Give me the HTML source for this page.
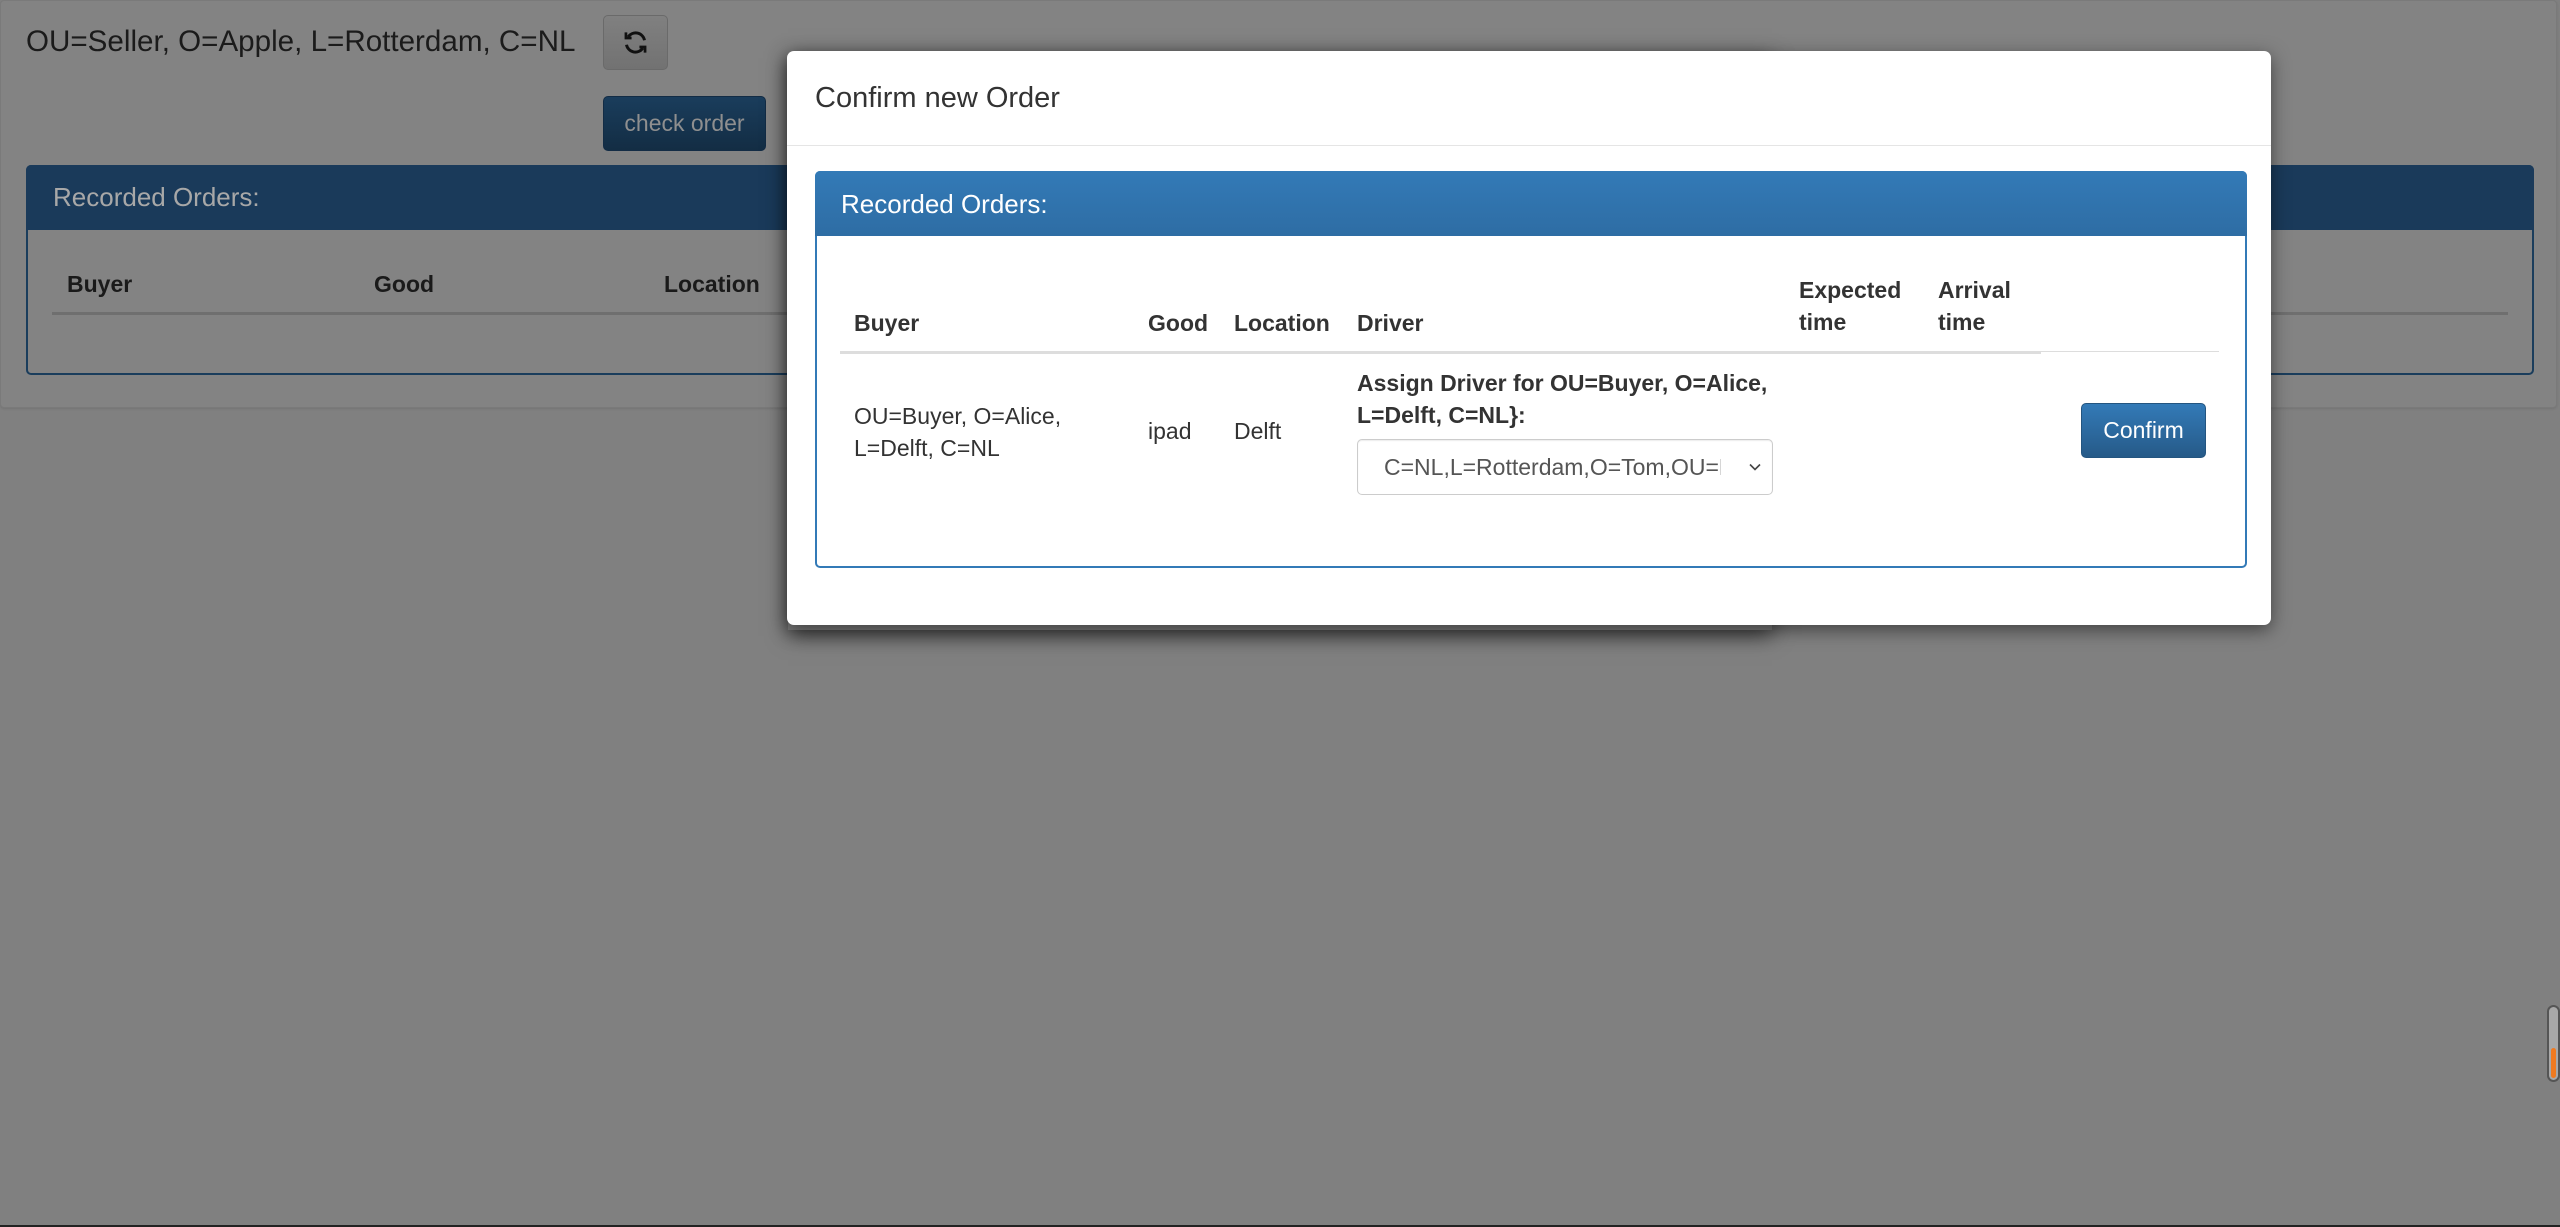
<!DOCTYPE html>
<html><head><meta charset="utf-8"><style>
*{box-sizing:border-box;margin:0;padding:0}
html,body{width:2560px;height:1227px;overflow:hidden;background:#808080;font-family:"Liberation Sans",Arial,sans-serif;color:#333;position:relative}
.a{position:absolute;white-space:nowrap}
.t{font-size:23px;line-height:32px}
.b{font-weight:bold}
</style></head><body>
<!-- background (dimmed) -->
<div class="a" style="left:0;top:0;width:2557px;height:408px;background:#838383;border:1px solid #7a7a7a;border-radius:4px;box-shadow:0 1px 2px rgba(0,0,0,.1)"></div>
<div class="a" style="left:26px;top:24px;font-size:29.6px;line-height:36px;color:#1b1b1b">OU=Seller, O=Apple, L=Rotterdam, C=NL</div>
<div class="a" style="left:603px;top:15px;width:65px;height:55px;border:1px solid #6a6a6a;border-radius:5px;background:linear-gradient(#808080,#727272)"></div>
<svg class="a" style="left:622px;top:29px" width="27" height="27" viewBox="0 0 24 24" fill="none" stroke="#111" stroke-width="2.6"><path d="M20 10a8 8 0 0 0-14.5-3"/><path d="M4 14a8 8 0 0 0 14.5 3"/><path d="M3.5 3v5h5" stroke-width="2.4"/><path d="M20.5 21v-5h-5" stroke-width="2.4"/></svg>
<div class="a t" style="left:603px;top:96px;width:163px;height:55px;border:1px solid #132c45;border-radius:5px;background:linear-gradient(#1a3d5c,#132d44);color:#8f8f8f;text-align:center;line-height:53px">check order</div>
<div class="a" style="left:26px;top:165px;width:2508px;height:210px;border:2px solid #1a3d5c;border-radius:5px"></div>
<div class="a" style="left:26px;top:165px;width:2508px;height:65px;background:#1a3a5a;border-radius:5px 5px 0 0"></div>
<div class="a" style="left:53px;top:181px;font-size:26px;line-height:32px;color:#a8a8a8">Recorded Orders:</div>
<div class="a t b" style="left:67px;top:268px;color:#1a1a1a">Buyer</div>
<div class="a t b" style="left:374px;top:268px;color:#1a1a1a">Good</div>
<div class="a t b" style="left:664px;top:268px;color:#1a1a1a">Location</div>
<div class="a" style="left:52px;top:312px;width:2456px;height:3px;background:#6f6f6f"></div>
<div class="a" style="left:0;top:1225px;width:2560px;height:2px;background:#222"></div>
<!-- scrollbar -->
<div class="a" style="left:2547px;top:1005px;width:13px;height:77px;border:2px solid #555;border-radius:7px;background:#a8a8a8"></div>
<div class="a" style="left:2551px;top:1048px;width:5px;height:30px;background:#f07a20;border-radius:3px"></div>
<!-- shadow of box behind modal -->
<div class="a" style="left:788px;top:52px;width:984px;height:578px;background:#7a7a7a;box-shadow:0 6px 20px rgba(0,0,0,.55)"></div>
<!-- modal -->
<div class="a" style="left:787px;top:51px;width:1484px;height:574px;background:#fff;border-radius:7px;box-shadow:0 5px 18px rgba(0,0,0,.5)"></div>
<div class="a" style="left:815px;top:80px;font-size:29px;line-height:36px;color:#333">Confirm new Order</div>
<div class="a" style="left:787px;top:145px;width:1484px;height:1px;background:#e5e5e5"></div>
<div class="a" style="left:815px;top:171px;width:1432px;height:397px;border:2px solid #337ab7;border-radius:5px"></div>
<div class="a" style="left:815px;top:171px;width:1432px;height:65px;background:linear-gradient(#337ab7,#2e6da4);border-radius:5px 5px 0 0"></div>
<div class="a" style="left:841px;top:188px;font-size:26px;line-height:32px;color:#fff">Recorded Orders:</div>
<div class="a t b" style="left:854px;top:307px">Buyer</div>
<div class="a t b" style="left:1148px;top:307px">Good</div>
<div class="a t b" style="left:1234px;top:307px">Location</div>
<div class="a t b" style="left:1357px;top:307px">Driver</div>
<div class="a t b" style="left:1799px;top:274px">Expected<br>time</div>
<div class="a t b" style="left:1938px;top:274px">Arrival<br>time</div>
<div class="a" style="left:840px;top:351px;width:1201px;height:3px;background:#ddd"></div>
<div class="a" style="left:2041px;top:351px;width:178px;height:1px;background:#ddd"></div>
<div class="a t" style="left:854px;top:400px">OU=Buyer, O=Alice,<br>L=Delft, C=NL</div>
<div class="a t" style="left:1148px;top:415px">ipad</div>
<div class="a t" style="left:1234px;top:415px">Delft</div>
<div class="a t b" style="left:1357px;top:367px">Assign Driver for OU=Buyer, O=Alice,<br>L=Delft, C=NL}:</div>
<div class="a" style="left:1357px;top:439px;width:416px;height:56px;border:1px solid #ccc;border-radius:5px;background:#fff;box-shadow:inset 0 1px 1px rgba(0,0,0,.075)"></div>
<div class="a t" style="left:1384px;top:451px;color:#555;width:337px;overflow:hidden">C=NL,L=Rotterdam,O=Tom,OU=Driver</div>
<svg class="a" style="left:1748px;top:460px" width="14" height="14" viewBox="0 0 14 14" fill="none" stroke="#444" stroke-width="1.6"><path d="M2 4.5l5 5 5-5"/></svg>
<div class="a t" style="left:2081px;top:403px;width:125px;height:55px;border:1px solid #245580;border-radius:5px;background:linear-gradient(#337ab7,#265a88);color:#fff;text-align:center;line-height:53px">Confirm</div>
</body></html>
